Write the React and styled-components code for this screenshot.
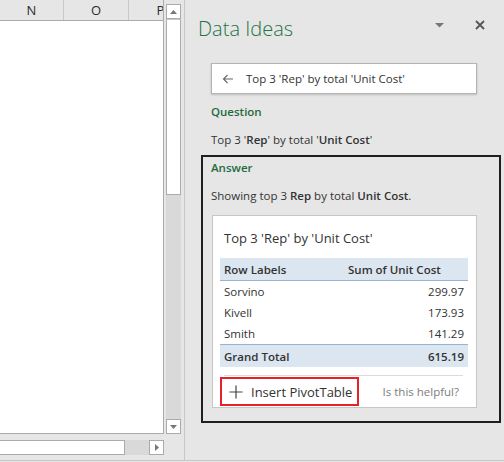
import React from "react";
import styled, { createGlobalStyle } from "styled-components";

const GlobalStyle = createGlobalStyle`
  html, body {
    margin: 0;
    padding: 0;
  }
  body {
    font-family: "Open Sans", "Noto Sans", sans-serif;
    background: #e6e6e6;
    color: #333;
  }
`;

const sheetColumns = [
  { name: "N", width: 64 },
  { name: "O", width: 65 },
  { name: "P", width: 64 },
];

const reps = [
  { name: "Sorvino", cost: "299.97" },
  { name: "Kivell", cost: "173.93" },
  { name: "Smith", cost: "141.29" },
];

const Arrow = ({ dir }) => {
  const shapes = {
    up: "0,4 7,4 3.5,0",
    down: "0,0 7,0 3.5,4",
    right: "0,0 4,3.5 0,7",
  };
  const size = dir === "right" ? [4, 7] : [7, 4];
  return (
    <svg width={size[0]} height={size[1]} viewBox={`0 0 ${size[0]} ${size[1]}`}>
      <polygon points={shapes[dir]} fill="#777" />
    </svg>
  );
};

const App = () => {
  return (
    <>
      <GlobalStyle />
      <Window>
        <Workspace>
          <SheetSide>
            <SheetTop>
              <Grid>
                <HeaderRow>
                  {sheetColumns.map((col) => (
                    <HeaderCell key={col.name} width={col.width}>
                      {col.name}
                    </HeaderCell>
                  ))}
                </HeaderRow>
                <Cells />
              </Grid>
              <VScroll>
                <ScrollButton>
                  <Arrow dir="up" />
                </ScrollButton>
                <VThumb />
                <Track />
                <ScrollButton>
                  <Arrow dir="down" />
                </ScrollButton>
              </VScroll>
            </SheetTop>
            <HScroll>
              <HThumb />
              <Track />
              <ScrollButton>
                <Arrow dir="right" />
              </ScrollButton>
            </HScroll>
          </SheetSide>

          <Panel>
            <TitleBar>
              <Title>Data Ideas</Title>
              <TitleActions>
                <svg width="9" height="5" viewBox="0 0 9 5">
                  <polygon points="0,0 9,0 4.5,4.5" fill="#777" />
                </svg>
                <svg width="10" height="10" viewBox="0 0 10 10">
                  <path d="M1 1 L9 9 M9 1 L1 9" stroke="#555" strokeWidth="1.8" />
                </svg>
              </TitleActions>
            </TitleBar>

            <Content>
              <SearchBox>
                <svg width="12" height="10" viewBox="0 0 12 10">
                  <path
                    d="M11 5 H1.5 M5.5 1 L1.5 5 L5.5 9"
                    stroke="#666"
                    strokeWidth="1.1"
                    fill="none"
                  />
                </svg>
                <span>Top 3 'Rep' by total 'Unit Cost'</span>
              </SearchBox>

              <SectionLabel>Question</SectionLabel>
              <Sentence>
                Top 3 '<b>Rep</b>' by total '<b>Unit Cost</b>'
              </Sentence>

              <AnswerBox>
                <SectionLabel flush>Answer</SectionLabel>
                <Sentence flush>
                  Showing top 3 <b>Rep</b> by total <b>Unit Cost</b>.
                </Sentence>

                <Card>
                  <CardTitle>Top 3 'Rep' by 'Unit Cost'</CardTitle>
                  <Pivot>
                    <thead>
                      <tr>
                        <HeadCell first>Row Labels</HeadCell>
                        <HeadCell>Sum of Unit Cost</HeadCell>
                      </tr>
                    </thead>
                    <tbody>
                      {reps.map((r) => (
                        <tr key={r.name}>
                          <BodyCell>{r.name}</BodyCell>
                          <BodyCell numeric>{r.cost}</BodyCell>
                        </tr>
                      ))}
                      <tr>
                        <TotalCell>Grand Total</TotalCell>
                        <TotalCell numeric>615.19</TotalCell>
                      </tr>
                    </tbody>
                  </Pivot>
                  <Divider />
                  <CardFooter>
                    <InsertButton>
                      <svg width="14" height="14" viewBox="0 0 14 14">
                        <path d="M7 0.5 V13.5 M0.5 7 H13.5" stroke="#444" strokeWidth="1.2" />
                      </svg>
                      Insert PivotTable
                    </InsertButton>
                    <Helpful>Is this helpful?</Helpful>
                  </CardFooter>
                </Card>
              </AnswerBox>
            </Content>
          </Panel>
        </Workspace>
      </Window>
    </>
  );
};

export default App;

const Window = styled.div`
  width: 504px;
  height: 462px;
  overflow: hidden;
  background: #e6e6e6;
`;

const Workspace = styled.div`
  display: flex;
  height: 460px;
  border-bottom: 1px solid #c6c6c6;
`;

const SheetSide = styled.div`
  width: 185px;
  flex: none;
  box-sizing: border-box;
  border-right: 1px solid #c6c6c6;
  display: flex;
  flex-direction: column;
`;

const SheetTop = styled.div`
  display: flex;
  align-items: flex-start;
`;

const Grid = styled.div`
  width: 164px;
  height: 434px;
  box-sizing: border-box;
  overflow: hidden;
  background: #fff;
  border-right: 1px solid #ababab;
  border-bottom: 1px solid #ababab;
  display: flex;
  flex-direction: column;
`;

const HeaderRow = styled.div`
  display: flex;
  height: 21px;
  box-sizing: border-box;
  background: #e6e6e6;
  border-bottom: 1px solid #ababab;
`;

const HeaderCell = styled.div`
  flex: none;
  width: ${(p) => p.width}px;
  box-sizing: border-box;
  border-right: 1px solid #c8c8c8;
  display: flex;
  align-items: center;
  justify-content: center;
  font-size: 13px;
  color: #2b2b2b;
`;

const Cells = styled.div`
  flex: 1;
  background: #fff;
`;

const VScroll = styled.div`
  width: 15px;
  height: 430px;
  margin: 4px 0 0 2px;
  display: flex;
  flex-direction: column;
  box-sizing: border-box;
`;

const ScrollButton = styled.div`
  flex: none;
  width: 15px;
  height: 15px;
  box-sizing: border-box;
  background: #fff;
  border: 1px solid #ababab;
  display: flex;
  align-items: center;
  justify-content: center;
`;

const VThumb = styled.div`
  flex: none;
  height: 176px;
  background: #fff;
  box-sizing: border-box;
  border: 1px solid #ababab;
  border-top: 1px solid #c8c8c8;
`;

const Track = styled.div`
  flex: 1;
  background: #d9d9d9;
`;

const HScroll = styled.div`
  display: flex;
  width: 164px;
  height: 15px;
  margin-top: 6px;
`;

const HThumb = styled.div`
  flex: none;
  width: 125px;
  background: #fff;
  box-sizing: border-box;
  border: 1px solid #ababab;
  border-left: none;
`;

const Panel = styled.div`
  flex: 1;
  display: flex;
  flex-direction: column;
`;

const TitleBar = styled.div`
  display: flex;
  align-items: center;
  justify-content: space-between;
  height: 54px;
  padding: 2px 19px 0 13px;
  box-sizing: border-box;
`;

const Title = styled.div`
  font-size: 20px;
  font-weight: 300;
  color: #217346;
`;

const TitleActions = styled.div`
  display: flex;
  align-items: center;
  gap: 31px;
  padding-bottom: 6px;
`;

const Content = styled.div`
  display: flex;
  flex-direction: column;
  padding: 0 3px 0 16px;
`;

const SearchBox = styled.div`
  height: 31px;
  margin: 9px 24px 0 10px;
  box-sizing: border-box;
  background: #fff;
  border: 1px solid #b4b4b4;
  box-shadow: 0 1px 2px rgba(0, 0, 0, 0.18);
  display: flex;
  align-items: center;
  gap: 12px;
  padding-left: 10px;
  font-size: 11.5px;
  color: #333;
`;

const SectionLabel = styled.div`
  margin: ${(p) => (p.flush ? "2px 0 0 0" : "9px 0 0 10px")};
  line-height: 18px;
  font-size: 11.5px;
  font-weight: 600;
  color: #1e6b41;
`;

const Sentence = styled.div`
  margin: ${(p) => (p.flush ? "10px 0 0 0" : "10px 0 0 10px")};
  line-height: 18px;
  font-size: 11.5px;
  color: #333;

  b {
    font-weight: 600;
  }
`;

const AnswerBox = styled.div`
  width: 300px;
  margin-top: 6px;
  box-sizing: border-box;
  border: 2px solid #1f1f1f;
  padding: 0 22px 13px 8px;
`;

const Card = styled.div`
  margin-top: 10px;
  margin-left: 1px;
  background: #fff;
  border: 1px solid #c6c6c6;
  display: flex;
  flex-direction: column;
  padding: 0 8px 0 7px;
`;

const CardTitle = styled.div`
  margin: 12px 0 0 4px;
  line-height: 20px;
  font-size: 13px;
  color: #333;
`;

const Pivot = styled.table`
  margin-top: 10px;
  border-collapse: collapse;
  width: 100%;
  font-size: 11.5px;
  color: #333;
`;

const HeadCell = styled.th`
  height: 22px;
  padding: 0 4px;
  width: ${(p) => (p.first ? "116px" : "auto")};
  text-align: left;
  font-weight: 600;
  background: #dce6f1;
  border-bottom: 1px solid #95b3d7;
`;

const BodyCell = styled.td`
  height: 21px;
  padding: 0 4px;
  text-align: ${(p) => (p.numeric ? "right" : "left")};
`;

const TotalCell = styled.td`
  height: 22px;
  padding: 0 4px;
  font-weight: 600;
  background: #dce6f1;
  border-top: 1px solid #95b3d7;
  text-align: ${(p) => (p.numeric ? "right" : "left")};
`;

const Divider = styled.div`
  height: 1px;
  margin: 8px 5px 0 4px;
  background: #dcdcdc;
`;

const CardFooter = styled.div`
  display: flex;
  align-items: center;
  justify-content: space-between;
  margin: 1px 9px 1px 0;
`;

const InsertButton = styled.div`
  height: 29px;
  box-sizing: border-box;
  border: 2px solid #e8202a;
  display: flex;
  align-items: center;
  gap: 8px;
  padding: 0 5px 0 7px;
  font-size: 13px;
  color: #333;
`;

const Helpful = styled.div`
  font-size: 11.5px;
  color: #7d7d7d;
`;
